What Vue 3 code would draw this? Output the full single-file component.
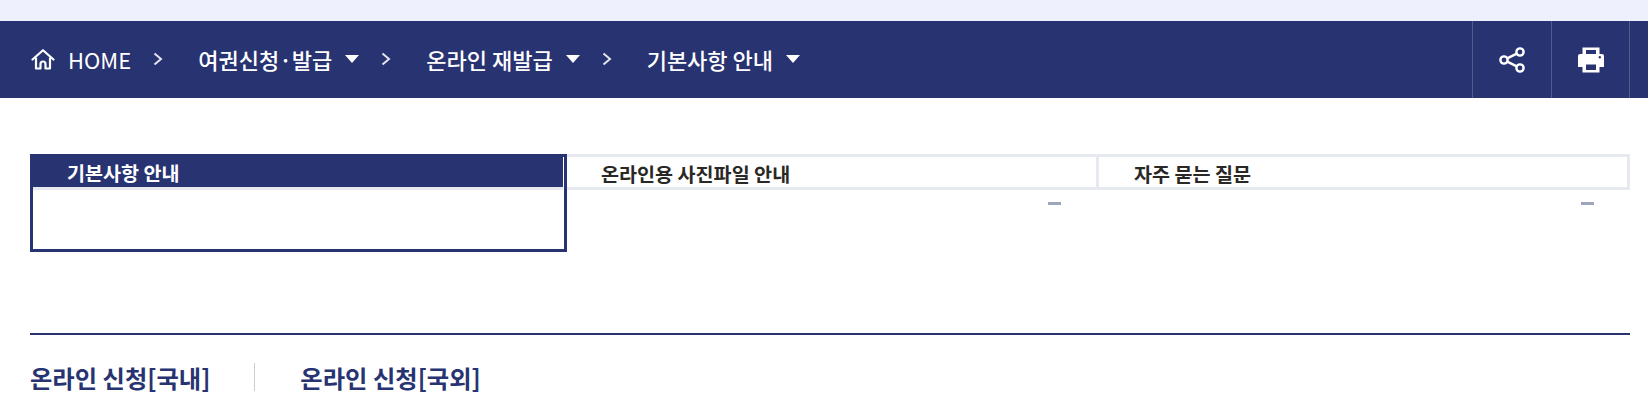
<script setup>
const crumbs = [
  { label: '여권신청·발급' },
  { label: '온라인 재발급' },
  { label: '기본사항 안내' },
]
</script>

<template>
  <div class="page">
    <div class="top-strip"></div>
    <nav class="location">
      <div class="crumbs">
        <a class="home">
          <svg width="24" height="24" viewBox="0 0 24 24" fill="none" stroke="#fff" stroke-width="2.200" stroke-linejoin="round">
            <path d="M1.500 12.500 12 3.200l10.500 9.300" stroke-linecap="round" />
            <path d="M5 10.500V21.500h4.500v-4.500a2.500 2.500 0 0 1 5 0v4.500H19V10.500" />
          </svg>
          <span>HOME</span>
        </a>
        <template v-for="item in crumbs" :key="item.label">
          <svg class="chev" width="10" height="14" viewBox="0 0 10 14" fill="none" stroke="#e4e6f0" stroke-width="2">
            <path d="M1.500 1.500 8 7l-6.500 5.500" />
          </svg>
          <span class="crumb">{{ item.label }}<i class="caret"></i></span>
        </template>
      </div>
      <div class="actions">
        <button class="action" type="button" aria-label="공유">
          <svg width="26" height="26" viewBox="0 0 26 26" fill="none" stroke="#fff" stroke-width="2.400">
            <circle cx="21" cy="5" r="3.600" />
            <circle cx="5" cy="13" r="3.600" />
            <circle cx="21" cy="21" r="3.600" />
            <path d="M8.200 11.400 17.800 6.600M8.200 14.600l9.600 4.800" />
          </svg>
        </button>
        <button class="action" type="button" aria-label="인쇄">
          <svg width="26" height="26" viewBox="0 0 26 26">
            <path fill="#fff" fill-rule="evenodd" d="M4.500 0.500h17v6.500h2.500a2 2 0 0 1 2 2v11h-4.500v5.500h-17V20H0V9a2 2 0 0 1 2-2h2.500zM8 3v4h10V3zM8 17.500V23h10v-5.500zM21.800 9a1.200 1.200 0 1 0 0 2.400 1.200 1.200 0 0 0 0-2.400z" />
          </svg>
        </button>
      </div>
    </nav>

    <main class="content">
      <div class="tabs">
        <div class="tab is-active">
          <div class="tab-head">기본사항 안내</div>
        </div>
        <div class="tab">
          <div class="tab-head">온라인용 사진파일 안내</div>
          <i class="dash"></i>
        </div>
        <div class="tab">
          <div class="tab-head">자주 묻는 질문</div>
          <i class="dash"></i>
        </div>
      </div>

      <div class="apply">
        <h3>온라인 신청[국내]</h3>
        <h3>온라인 신청[국외]</h3>
      </div>
    </main>
  </div>
</template>

<style>
body {
  background: #fff;
}
</style>

<style scoped>
.page {
  height: 417px;
  overflow: hidden;
  font-family: "Noto Sans CJK KR", "Noto Sans", sans-serif;
}

.top-strip {
  height: 21px;
  background: #eef0fe;
}

.location {
  display: flex;
  height: 77px;
  align-items: center;
  justify-content: space-between;
  background: #283371;
  color: #fff;
  padding-left: 31px;
  padding-right: 18px;
}

.crumbs {
  display: flex;
  align-items: center;
  font-size: 22px;
  font-weight: 500;
  line-height: 32px;
  padding-bottom: 1px;
}

.home {
  display: flex;
  align-items: center;
  gap: 13px;
  font-weight: 400;
}

.chev {
  margin: 0 35px 0 22px;
}

.crumb {
  display: flex;
  align-items: center;
}

.caret {
  width: 0;
  height: 0;
  margin-left: 13px;
  border-left: 7px solid transparent;
  border-right: 7px solid transparent;
  border-top: 8px solid #fff;
}

.actions {
  display: flex;
  height: 100%;
  border-right: 1px solid #535c8d;
}

.action {
  display: flex;
  width: 79px;
  align-items: center;
  justify-content: center;
  border: 0;
  border-left: 1px solid #535c8d;
  background: none;
  padding: 0;
}

.action + .action {
  width: 78px;
}

.content {
  padding: 56px 18px 0 30px;
}

.tabs {
  display: grid;
  grid-template-columns: 537px 532px 531px;
  height: 98px;
  align-items: start;
}

.tab-head {
  height: 36px;
  border: 3px solid #e6e9ef;
  color: #2a2825;
  font-size: 19.600px;
  font-weight: 700;
  line-height: 33px;
  padding-left: 34px;
  box-sizing: border-box;
}

.tab + .tab .tab-head {
  border-left-width: 0;
}

.tab + .tab + .tab .tab-head {
  padding-left: 35px;
}

.dash {
  display: block;
  width: 13px;
  height: 3px;
  margin: 12px 36px 0 auto;
  background: #9ea6bb;
}

.tab:nth-child(2) .dash {
  margin-right: 38px;
}

.is-active {
  height: 98px;
  border: 3px solid #283371;
  box-sizing: border-box;
}

.is-active .tab-head {
  height: 33px;
  margin-right: 1px;
  border: 0;
  border-bottom: 3px solid #e6e9ef;
  background: #283371;
  color: #fff;
  line-height: 31px;
}

.apply {
  display: flex;
  margin-top: 81px;
  border-top: 2px solid #283371;
  padding-top: 28px;
}

.apply h3 {
  margin: 0;
  color: #283371;
  font-size: 24.300px;
  font-weight: 700;
  line-height: 30px;
}

.apply h3 + h3 {
  margin-left: 90px;
  position: relative;
}

.apply h3 + h3::before {
  content: "";
  position: absolute;
  top: 0;
  left: -46px;
  width: 1px;
  height: 28px;
  background: #cdcdcd;
}
</style>
